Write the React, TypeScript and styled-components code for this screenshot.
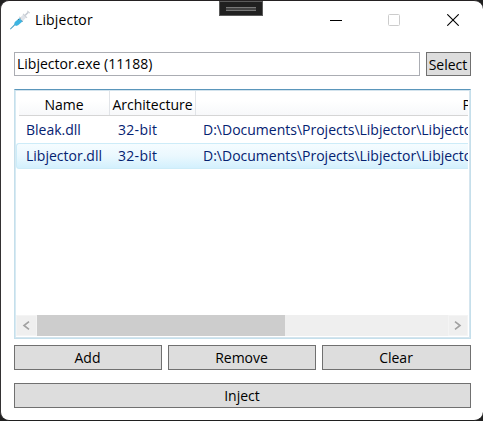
import React from "react";
import styled, { createGlobalStyle } from "styled-components";

const GlobalStyle = createGlobalStyle`
  * { box-sizing: border-box; }
  html, body { margin: 0; background: #202020; overflow: hidden; }
  button { margin: 0; padding: 0; font: inherit; letter-spacing: inherit; color: inherit; }
`;

const Window = styled.main`
  position: relative;
  width: 483px;
  height: 421px;
  padding: 1px 0 0;
  border: 1px solid #343233;
  border-right-width: 0;
  border-radius: 9px;
  background: #fff;
  color: #000;
  font-family: "Open Sans", "Noto Sans", sans-serif;
  font-size: 14px;
  line-height: 20px;
  white-space: nowrap;
  overflow: hidden;
  border-top: 1px solid #242122;
  border-bottom-color: #202020;
`;

const TitleBar = styled.header`
  display: flex;
  align-items: center;
  height: 36px;
  padding: 0 1px 0 9px;
`;

const Title = styled.span`
  flex: 1;
  margin-left: 4px;
  letter-spacing: 0.12px;
`;

const CaptionButton = styled.button<{ $width: number }>`
  display: flex;
  align-items: center;
  justify-content: center;
  width: ${(p) => p.$width}px;
  height: 36px;
  border: 0;
  background: none;
`;

const DebugHandle = styled.div`
  position: absolute;
  z-index: 2;
  top: 0;
  left: 218px;
  display: flex;
  align-items: center;
  justify-content: center;
  width: 44px;
  height: 15px;
  border: 1px solid #5b5b5b;
  background: #202020;
`;

const Grip = styled.div`
  width: 30px;
  height: 4px;
  border: solid #787878;
  border-width: 1px 0;
  background: #444;
`;

const Content = styled.section`
  display: flex;
  flex-direction: column;
  padding: 14px 12px 0 13px;
`;

const ProcessRow = styled.div`
  display: flex;
  gap: 6px;
`;

const ProcessField = styled.div`
  width: 406px;
  height: 24px;
  padding: 1px 2px;
  border: 1px solid #abadb3;
`;

const Label = styled.span<{ $spacing?: number }>`
  letter-spacing: ${(p) => p.$spacing ?? 0}px;
`;

const Button = styled.button<{ $width?: number; $height?: number }>`
  display: flex;
  align-items: center;
  justify-content: center;
  width: ${(p) => (p.$width ? `${p.$width}px` : "100%")};
  height: ${(p) => p.$height ?? 25}px;
  padding: 1px 1px 0 0;
  border: 1px solid #707070;
  background: #ddd;
`;

const ListView = styled.div`
  display: flex;
  flex-direction: column;
  width: 457px;
  height: 250px;
  margin-top: 13px;
  padding: 0 2px 1px 1px;
  border: 1px solid #c5dfeb;
  border-top-color: #5a96bb;
  box-shadow: inset 0 1px #d3e3ed, inset -1px -1px #d5e5ee, inset 1px 0 #d7eaf3;
`;

const ListHeader = styled.div`
  display: flex;
  width: 449px;
  height: 25px;
  margin: 1px 0 1px 3px;
  border-bottom: 1px solid #d5d5d5;
  background: linear-gradient(#fff 40%, #f7f8fa);
  overflow: hidden;
`;

const HeaderCell = styled.div<{ $width: number }>`
  flex: none;
  width: ${(p) => p.$width}px;
  padding-top: 4px;
  border-right: 1px solid #e1e4e8;
  text-align: center;
`;

const ListRow = styled.div<{ $selected?: boolean }>`
  display: flex;
  height: 26px;
  padding: 2px 0 0 9px;
  border: solid ${(p) => (p.$selected ? "#cdecf8" : "transparent")};
  border-width: 1px 0 1px 1px;
  border-radius: 3px 0 0 3px;
  background: ${(p) => (p.$selected ? "linear-gradient(#f5fcff 0, #eaf8fe 50%, #d3f0fd)" : "none")};
  color: #042271;
  overflow: hidden;
`;

const Cell = styled.span<{ $width: number }>`
  flex: none;
  width: ${(p) => p.$width}px;
`;

const ScrollBar = styled.div`
  display: grid;
  grid-template-columns: 21px 248px 1fr 20px;
  height: 21px;
  margin: auto 0 1px 0;
  background: #efefef;
`;

const ScrollArrow = styled.div`
  display: flex;
  align-items: center;
  justify-content: center;
  padding-right: 1px;
  border: 1px solid #f4f4f4;
`;

const ScrollThumb = styled.div`
  background: #cdcdcd;
`;

const Actions = styled.div`
  display: grid;
  grid-template-columns: 148px 148px 149px;
  gap: 6px;
  margin: 6px 0 13px;
`;

const Syringe = () => (
  <svg width="21" height="20" viewBox="0 0 21 20" fill="none">
    <path d="M.3 19.2 5.5 14" stroke="#53a4c5" strokeWidth="1.1" />
    <path d="m4.2 14.2.6-2.2 4.7-4 3.2 3.2-4.6 4-2.2.7Z" fill="#3db5e2" />
    <path d="m9.5 8 4.2-3.8 2.8 2.8-3.8 4.2Z" fill="#dfe3e9" />
    <path d="m15 5.5 3.3-3.3" stroke="#c5cbd3" strokeWidth="1.6" />
    <path d="m17.3.8 2.4 2.4M13 3.8l4 4" stroke="#cdd1d7" strokeWidth="1.1" />
    <path d="m8 9 .8.8M9.7 7.4l.8.8m1.2 2.3.8.8" stroke="#4a5362" strokeWidth=".9" />
  </svg>
);

const Chevron = ({ right = false }: { right?: boolean }) => (
  <svg width="8" height="9" viewBox="0 0 8 9" fill="none">
    <path d={right ? "m1 .7 5 3.8-5 3.8" : "m7 .7-5 3.8 5 3.8"} stroke="#a1a1a1" strokeWidth="1.6" />
  </svg>
);

const files = [
  { name: "Bleak.dll", selected: false },
  { name: "Libjector.dll", selected: true },
];

export default function App() {
  return (
    <>
      <GlobalStyle />
      <Window>
        <DebugHandle><Grip /></DebugHandle>
        <TitleBar>
          <Syringe />
          <Title>Libjector</Title>
          <CaptionButton $width={58} aria-label="Minimize">
            <svg width="12" height="1"><path d="M0 .5h12" stroke="#000" /></svg>
          </CaptionButton>
          <CaptionButton $width={58} aria-label="Maximize">
            <svg width="12" height="12" fill="none"><rect x=".5" y=".5" width="11" height="11" rx="1" stroke="#ccc" /></svg>
          </CaptionButton>
          <CaptionButton $width={59} aria-label="Close">
            <svg width="12" height="12"><path d="m.3.3 11.4 11.4m0-11.4L.3 11.7" stroke="#000" strokeWidth="1.1" /></svg>
          </CaptionButton>
        </TitleBar>
        <Content>
          <ProcessRow>
            <ProcessField><Label>Libjector.exe (11188)</Label></ProcessField>
            <Button $width={45} $height={24}><Label>Select</Label></Button>
          </ProcessRow>
          <ListView>
            <ListHeader>
              <HeaderCell $width={91}><Label>Name</Label></HeaderCell>
              <HeaderCell $width={86}><Label>Architecture</Label></HeaderCell>
              <HeaderCell $width={564}><Label>Path</Label></HeaderCell>
            </ListHeader>
            {files.map((file) => (
              <ListRow key={file.name} $selected={file.selected}>
                <Cell $width={92}><Label>{file.name}</Label></Cell>
                <Cell $width={85}><Label $spacing={0.3}>32-bit</Label></Cell>
                <Cell $width={564}><Label>D:\Documents\Projects\Libjector\Libjector</Label></Cell>
              </ListRow>
            ))}
            <ScrollBar>
              <ScrollArrow><Chevron /></ScrollArrow>
              <ScrollThumb />
              <div />
              <ScrollArrow><Chevron right /></ScrollArrow>
            </ScrollBar>
          </ListView>
          <Actions>
            <Button><Label>Add</Label></Button>
            <Button><Label>Remove</Label></Button>
            <Button><Label>Clear</Label></Button>
          </Actions>
          <Button><Label>Inject</Label></Button>
        </Content>
      </Window>
    </>
  );
}
